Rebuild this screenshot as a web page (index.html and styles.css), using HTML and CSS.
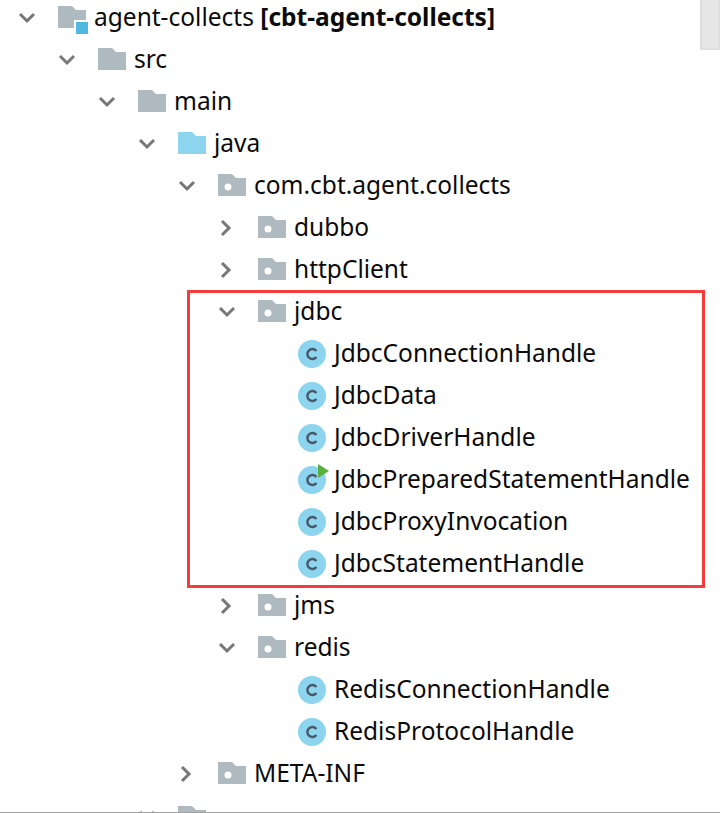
FILE: index.html
```html
<!DOCTYPE html>
<html lang="en">
<head>
    <meta charset="UTF-8">
    <title>Project tree</title>
    <link rel="stylesheet" href="styles.css">
</head>
<body>

    <!-- shared icons -->
    <svg class="defs" width="0" height="0">
        <symbol id="down" viewBox="0 0 18 18"><path d="M2 5l7 7 7-7" fill="none" stroke="#777" stroke-width="3"/></symbol>
        <symbol id="right" viewBox="0 0 18 18"><path d="M4 2l7 7-7 7" fill="none" stroke="#777" stroke-width="3"/></symbol>
        <symbol id="folder" viewBox="0 0 28 24"><path d="M0 0h14l4 4h10v18H0z" fill="#afb9c0"/></symbol>
        <symbol id="source" viewBox="0 0 28 24"><path d="M0 0h14l4 4h10v18H0z" fill="#8dd4ee"/></symbol>
        <symbol id="package" viewBox="0 0 28 24"><path d="M0 0h14l4 4h10v18H0z" fill="#afb9c0"/><circle cx="10" cy="13" r="3.5" fill="#fff"/></symbol>
        <symbol id="module" viewBox="0 0 30 30"><path d="M0 0h14l4 4h10v10H16v8H0z" fill="#afb9c0"/><rect x="18" y="16" width="12" height="12" fill="#4fb8e0"/></symbol>
        <symbol id="class" viewBox="0 0 28 28"><circle cx="14" cy="14" r="14" fill="#8dd4ee"/><path d="M18.4 11a5 5 0 1 0 0 6" fill="none" stroke="#47586a" stroke-width="2.4"/></symbol>
    </svg>

    <div class="panel">
        <ul class="tree">
            <li class="row lvl-0"><svg class="arrow"><use href="#down"/></svg><svg class="icon module"><use href="#module"/></svg><span class="label">agent-collects <b>[cbt-agent-collects]</b></span></li>
            <li class="row lvl-1"><svg class="arrow"><use href="#down"/></svg><svg class="icon"><use href="#folder"/></svg><span class="label">src</span></li>
            <li class="row lvl-2"><svg class="arrow"><use href="#down"/></svg><svg class="icon"><use href="#folder"/></svg><span class="label">main</span></li>
            <li class="row lvl-3"><svg class="arrow"><use href="#down"/></svg><svg class="icon"><use href="#source"/></svg><span class="label">java</span></li>
            <li class="row lvl-4"><svg class="arrow"><use href="#down"/></svg><svg class="icon"><use href="#package"/></svg><span class="label">com.cbt.agent.collects</span></li>
            <li class="row lvl-5"><svg class="arrow"><use href="#right"/></svg><svg class="icon"><use href="#package"/></svg><span class="label">dubbo</span></li>
            <li class="row lvl-5"><svg class="arrow"><use href="#right"/></svg><svg class="icon"><use href="#package"/></svg><span class="label">httpClient</span></li>
            <li class="row lvl-5"><svg class="arrow"><use href="#down"/></svg><svg class="icon"><use href="#package"/></svg><span class="label">jdbc</span></li>
            <li class="row lvl-6"><svg class="icon cls"><use href="#class"/></svg><span class="label">JdbcConnectionHandle</span></li>
            <li class="row lvl-6"><svg class="icon cls"><use href="#class"/></svg><span class="label">JdbcData</span></li>
            <li class="row lvl-6"><svg class="icon cls"><use href="#class"/></svg><span class="label">JdbcDriverHandle</span></li>
            <li class="row lvl-6"><span class="cls-wrap"><svg class="icon cls"><use href="#class"/></svg><i class="run-mark"></i></span><span class="label">JdbcPreparedStatementHandle</span></li>
            <li class="row lvl-6"><svg class="icon cls"><use href="#class"/></svg><span class="label">JdbcProxyInvocation</span></li>
            <li class="row lvl-6"><svg class="icon cls"><use href="#class"/></svg><span class="label">JdbcStatementHandle</span></li>
            <li class="row lvl-5"><svg class="arrow"><use href="#right"/></svg><svg class="icon"><use href="#package"/></svg><span class="label">jms</span></li>
            <li class="row lvl-5"><svg class="arrow"><use href="#down"/></svg><svg class="icon"><use href="#package"/></svg><span class="label">redis</span></li>
            <li class="row lvl-6"><svg class="icon cls"><use href="#class"/></svg><span class="label">RedisConnectionHandle</span></li>
            <li class="row lvl-6"><svg class="icon cls"><use href="#class"/></svg><span class="label">RedisProtocolHandle</span></li>
            <li class="row lvl-4"><svg class="arrow"><use href="#right"/></svg><svg class="icon"><use href="#package"/></svg><span class="label">META-INF</span></li>
            <li class="row lvl-3 row-cut"><svg class="arrow"><use href="#down"/></svg><svg class="icon"><use href="#folder"/></svg><span class="label">resources</span></li>
        </ul>

        <div class="highlight"></div>
        <div class="scroll-thumb"></div>
    </div>

</body>
</html>
```

FILE: styles.css
```css
/* Reset */
* {
    margin: 0;
    padding: 0;
    box-sizing: border-box;
}

body {
    background: #fff;
    font-family: "Noto Sans", "Open Sans", sans-serif;
    color: #0b0b0b;
    overflow: hidden;
}

.defs {
    position: absolute;
}

/* Panel */
.panel {
    position: relative;
    height: 813px;
    border-bottom: 1px solid #a0a0a0;
    overflow: hidden;
}

.tree {
    list-style: none;
    margin-top: -3px;
}

/* Rows */
.row {
    display: flex;
    align-items: center;
    height: 42px;
    font-size: 24.5px;
    white-space: nowrap;
}

.label {
    padding-bottom: 4px;
}

/* Last row, only its top shows above the panel edge */
.row-cut {
    margin-top: 2px;
}

.row-cut .arrow {
    margin-bottom: 5px;
}

.row-cut .label {
    padding-bottom: 2px;
}

.lvl-0 { padding-left: 18px; }
.lvl-1 { padding-left: 58px; }
.lvl-2 { padding-left: 98px; }
.lvl-3 { padding-left: 138px; }
.lvl-4 { padding-left: 178px; }
.lvl-5 { padding-left: 218px; }
.lvl-6 { padding-left: 298px; }

.arrow {
    flex: none;
    width: 18px;
    height: 18px;
    margin-right: 22px;
}

.icon {
    flex: none;
    width: 28px;
    height: 24px;
    margin-right: 8px;
}

.icon.module {
    width: 30px;
    height: 30px;
    margin-top: 6px;
    margin-right: 6px;
}

.icon.cls {
    height: 28px;
}

/* Class icon with run marker */
.cls-wrap {
    position: relative;
    display: flex;
}

.run-mark {
    position: absolute;
    top: -2px;
    left: 20px;
    border-left: 11px solid #5bb03c;
    border-top: 7px solid transparent;
    border-bottom: 7px solid transparent;
}

/* Red selection box */
.highlight {
    position: absolute;
    top: 290px;
    left: 187px;
    width: 518px;
    height: 298px;
    border: 3px solid #f53c3c;
}

.scroll-thumb {
    position: absolute;
    top: 0;
    right: 0;
    width: 20px;
    height: 50px;
    background: #e6e6e6;
    border: 2px solid #dedede;
    border-top: 0;
}
```
